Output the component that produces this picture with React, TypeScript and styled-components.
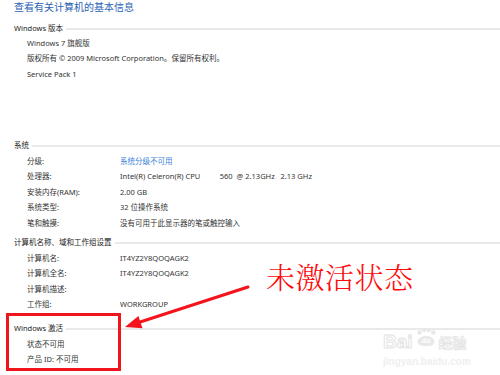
import React from 'react';
import styled, { createGlobalStyle } from 'styled-components';

const GlobalStyle = createGlobalStyle`
  html, body {
    margin: 0;
    padding: 0;
    background: #fff;
  }
  body {
    font-family: "Noto Sans", "Noto Sans CJK SC", sans-serif;
  }
`;

interface Row {
  label?: string;
  value: string;
  link?: boolean;
}

interface Section {
  title: string;
  top: number;
  rows: Row[];
}

const sections: Section[] = [
  {
    title: 'Windows 版本',
    top: 6,
    rows: [
      { value: 'Windows 7 旗舰版' },
      { value: '版权所有 © 2009 Microsoft Corporation。保留所有权利。' },
      { value: 'Service Pack 1' },
    ],
  },
  {
    title: '系统',
    top: 55.8,
    rows: [
      { label: '分级:', value: '系统分级不可用', link: true },
      { label: '处理器:', value: 'Intel(R) Celeron(R) CPU          560  @ 2.13GHz   2.13 GHz' },
      { label: '安装内存(RAM):', value: '2.00 GB' },
      { label: '系统类型:', value: '32 位操作系统' },
      { label: '笔和触摸:', value: '没有可用于此显示器的笔或触控输入' },
    ],
  },
  {
    title: '计算机名称、域和工作组设置',
    top: 4,
    rows: [
      { label: '计算机名:', value: 'IT4YZ2Y8QOQAGK2' },
      { label: '计算机全名:', value: 'IT4YZ2Y8QOQAGK2' },
      { label: '计算机描述:', value: '' },
      { label: '工作组:', value: 'WORKGROUP' },
    ],
  },
  {
    title: 'Windows 激活',
    top: 8.4,
    rows: [{ value: '状态不可用' }, { value: '产品 ID: 不可用' }],
  },
];

export default function App() {
  return (
    <Page>
      <GlobalStyle />
      <Title>查看有关计算机的基本信息</Title>
      {sections.map((s) => (
        <Block key={s.title} $top={s.top}>
          <Heading>
            <span>{s.title}</span>
            <Rule />
          </Heading>
          <Rows>
            {s.rows.map((r, i) =>
              r.label !== undefined ? (
                <InfoRow key={i}>
                  <Label>{r.label}</Label>
                  <Value $link={r.link}>{r.value}</Value>
                </InfoRow>
              ) : (
                <InfoRow key={i}>
                  <Value>{r.value}</Value>
                </InfoRow>
              )
            )}
          </Rows>
        </Block>
      ))}

      <MarkBox />
      <Arrow width="500" height="375" viewBox="0 0 500 375">
        <line x1="248" y1="287" x2="137" y2="323" stroke="#f5141c" strokeWidth="3" strokeLinecap="round" />
        <polygon points="125,327 142.5,328.3 138.4,316" fill="#f5141c" />
      </Arrow>
      <Callout>未激活状态</Callout>

      <Watermark>
        <PawRow>
          <BaiduWord>Bai</BaiduWord>
          <Paw viewBox="0 0 24 22">
            <circle cx="5" cy="5" r="2.5" />
            <circle cx="10" cy="2.5" r="2.3" />
            <circle cx="15" cy="2.5" r="2.3" />
            <circle cx="20" cy="5" r="2.5" />
            <path d="M3 13 Q12 4 21 13 Q23 20 12 20 Q1 20 3 13 Z" />
            <text x="12" y="17" textAnchor="middle" fontSize="8" fill="#fff" fontFamily="Liberation Sans, sans-serif" fontWeight="bold">du</text>
          </Paw>
          <BaiduCn>经验</BaiduCn>
        </PawRow>
        <Site>jingyan.baidu.com</Site>
      </Watermark>
    </Page>
  );
}

const Page = styled.div`
  position: relative;
  width: 500px;
  height: 375px;
  overflow: hidden;
  padding-left: 14px;
  box-sizing: border-box;
  font-size: 7.5px;
  color: #333;
`;

const Title = styled.div`
  font-family: "Noto Sans CJK SC", sans-serif;
  font-size: 10px;
  line-height: 14px;
  color: #2b62b4;
`;

const Block = styled.div<{ $top: number }>`
  margin-top: ${(p) => p.$top}px;
`;

const Heading = styled.div`
  display: flex;
  align-items: center;
  height: 14px;
  color: #222;
  white-space: nowrap;
`;

const Rule = styled.div`
  flex: 1;
  height: 2px;
  margin: 3px 0 0 3px;
  background: #e9e9e9;
`;

const Rows = styled.div`
  padding-top: 2px;
  padding-left: 13px;
`;

const InfoRow = styled.div`
  display: flex;
  height: 15.4px;
  line-height: 15.4px;
  white-space: pre;
`;

const Label = styled.div`
  width: 93px;
  flex-shrink: 0;
`;

const Value = styled.div<{ $link?: boolean }>`
  color: ${(p) => (p.$link ? '#3b82d6' : 'inherit')};
`;

const MarkBox = styled.div`
  position: absolute;
  left: 6px;
  top: 313px;
  width: 115px;
  height: 58px;
  box-sizing: border-box;
  border: 3px solid #f0141c;
`;

const Arrow = styled.svg`
  position: absolute;
  left: 0;
  top: 0;
  pointer-events: none;
`;

const Callout = styled.div`
  position: absolute;
  left: 266px;
  top: 260px;
  font-family: "Noto Serif CJK SC", "Noto Sans CJK SC", serif;
  font-weight: 300;
  font-size: 29px;
  line-height: 34px;
  color: #ff0a0a;
  letter-spacing: 0.5px;
`;

const Watermark = styled.div`
  position: absolute;
  left: 383px;
  top: 320px;
  color: #ececec;
`;

const PawRow = styled.div`
  display: flex;
  align-items: flex-end;
  height: 32px;
`;

const BaiduWord = styled.span`
  font-family: "Liberation Sans", sans-serif;
  font-weight: bold;
  font-size: 19px;
  line-height: 20px;
  color: #fff;
  -webkit-text-stroke: 1px #e4e4e4;
`;

const Paw = styled.svg`
  width: 22px;
  height: 28px;
  fill: #e8e8e8;
  margin: 0 2px;
`;

const BaiduCn = styled.span`
  font-family: "Noto Sans CJK SC", sans-serif;
  font-size: 14px;
  line-height: 20px;
  font-weight: bold;
  color: #fff;
  -webkit-text-stroke: 0.8px #e4e4e4;
`;

const Site = styled.div`
  font-family: "Liberation Sans", sans-serif;
  font-size: 10px;
  font-weight: bold;
  color: #efefef;
  margin-top: 4px;
`;
